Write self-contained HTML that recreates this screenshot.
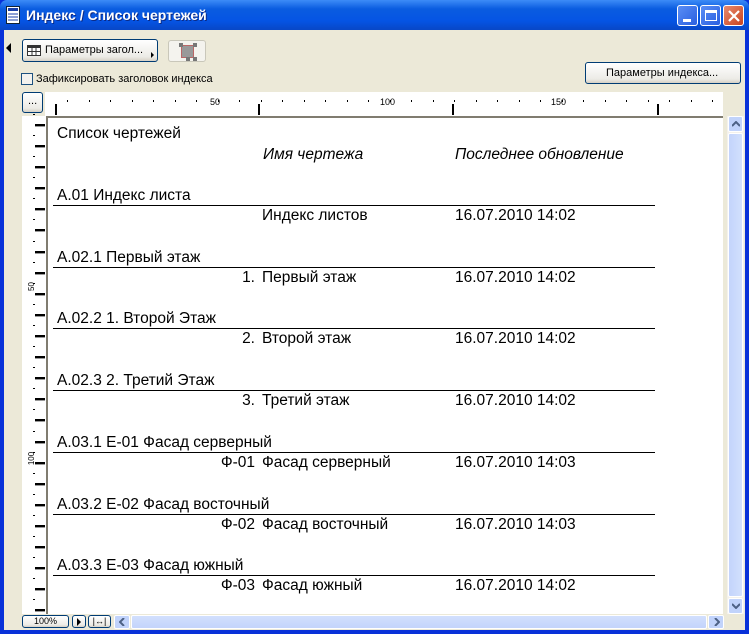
<!DOCTYPE html>
<html><head><meta charset="utf-8"><style>
*{margin:0;padding:0;box-sizing:border-box}
body{width:749px;height:634px;overflow:hidden;background:#0831d9;font-family:"Liberation Sans",sans-serif;position:relative}
.abs{position:absolute}
#title{left:0;top:0;width:749px;height:30px;background:linear-gradient(#3d8cf7,#0a5ce0 30%,#0554e4 70%,#0847c6);border-radius:7px 7px 0 0}
#title span{position:absolute;left:26px;top:7px;color:#fff;font-weight:bold;font-size:14px;text-shadow:1px 1px #0b2a85}
#client{left:4px;top:30px;width:741px;height:600px;background:#ece9d8}
.wbtn{top:5px;width:21px;height:21px;border:1px solid #fff;border-radius:3px;background:linear-gradient(135deg,#5a8ef5,#2a5fe0)}
.btn{border:1px solid #003c74;border-radius:3px;background:linear-gradient(#fff,#ecebe6 80%,#d6d0c5);font-size:11px;color:#000}
.t{position:absolute;font-size:15.5px;color:#000;white-space:nowrap;line-height:16px}
.ln{position:absolute;left:53px;width:602px;height:1px;background:#000}
.i{font-style:italic}
</style></head><body>
<div id="title" class="abs">
 <svg class="abs" style="left:6px;top:6px" width="14" height="18"><rect x="0.5" y="0.5" width="13" height="17" fill="#fff" stroke="#123"/><rect x="2" y="2" width="10" height="3" fill="#1a3fa8"/><g stroke="#1a3fa8"><line x1="2" y1="8" x2="12" y2="8"/><line x1="2" y1="11" x2="12" y2="11"/><line x1="2" y1="14" x2="12" y2="14"/></g></svg>
 <span>Индекс / Список чертежей</span>
 <div class="abs wbtn" style="left:677px"><div class="abs" style="left:5px;top:13px;width:8px;height:3px;background:#fff"></div></div>
 <div class="abs wbtn" style="left:700px"><div class="abs" style="left:4px;top:4px;width:12px;height:11px;border:1px solid #fff;border-top:3px solid #fff"></div></div>
 <div class="abs wbtn" style="left:723px;background:linear-gradient(135deg,#e88a6e,#c94420)"><svg class="abs" style="left:4px;top:4px" width="12" height="12"><path d="M1 1L11 11M11 1L1 11" stroke="#fff" stroke-width="2.2"/></svg></div>
</div>
<div id="client" class="abs"></div>
<svg class="abs" style="left:6px;top:43px" width="6" height="10"><path d="M5 0L0 5L5 10Z" fill="#000"/></svg>
<div class="abs btn" style="left:22px;top:39px;width:136px;height:23px"><svg class="abs" style="left:4px;top:5px" width="14" height="11"><rect x="0.5" y="0.5" width="13" height="10" fill="#fff" stroke="#333"/><rect x="0" y="0" width="14" height="3" fill="#333"/><path d="M0 6.5H14M5 3V11M9 3V11" stroke="#333"/></svg><span class="abs" style="left:22px;top:4px">Параметры загол...</span><svg class="abs" style="left:128px;top:12px" width="4" height="6"><path d="M0 0L3 3L0 6Z"/></svg></div>
<div class="abs" style="left:168px;top:40px;width:38px;height:22px;border:1px solid #c9c7ba;border-radius:3px;background:#f4f3ee"><div class="abs" style="left:12px;top:4px;width:13px;height:13px;background:#999;border:1px solid #b66"></div><svg class="abs" style="left:10px;top:2px" width="18" height="18" fill="#777"><rect x="0" y="0" width="4" height="4"/><rect x="14" y="0" width="4" height="4"/><rect x="14" y="14" width="4" height="4"/><rect x="7" y="14" width="4" height="4"/></svg></div>
<div class="abs" style="left:21px;top:73px;width:12px;height:12px;border:1px solid #1c5180;background:#f3f2ee"></div>
<span class="abs" style="left:36px;top:73px;font-size:11px">Зафиксировать заголовок индекса</span>
<div class="abs btn" style="left:585px;top:62px;width:156px;height:22px"><span class="abs" style="left:20px;top:4px">Параметры индекса...</span></div>
<div class="abs btn" style="left:22px;top:92px;width:21px;height:21px"><span class="abs" style="left:5px;top:2px">...</span></div>
<div class="abs" style="left:45px;top:92px;width:678px;height:24px;background:#fff"></div>
<div class="abs" style="left:22px;top:116px;width:24px;height:498px;background:#fff"></div>
<div class="abs" style="left:46px;top:116px;width:677px;height:498px;background:#fff;border-left:2px solid #807c70;border-top:2px solid #807c70"></div>
<div id="rt"></div>
<span class="abs" style="left:210px;top:97px;font-size:9px">50</span>
<span class="abs" style="left:380px;top:97px;font-size:9px">100</span>
<span class="abs" style="left:551px;top:97px;font-size:9px">150</span>
<span class="abs" style="left:27px;top:282px;font-size:8px;transform:rotate(-90deg)">50</span>
<span class="abs" style="left:25px;top:454px;font-size:8px;transform:rotate(-90deg)">100</span>
<div class="t" style="left:57px;top:126px">Список чертежей</div>
<div class="t i" style="left:263px;top:147px">Имя чертежа</div>
<div class="t i" style="left:455px;top:147px">Последнее обновление</div>
<div id="rows"></div>
<div class="abs" style="left:727px;top:116px;width:17px;height:498px;background:#f3f1ec"></div>
<div class="abs" style="left:728px;top:116px;width:15px;height:16px;border:1px solid #fff;border-radius:2px;background:#c1d3fb"><svg class="abs" style="left:3px;top:4px" width="8" height="6"><path d="M0 5L4 1L8 5" stroke="#4d6185" stroke-width="2" fill="none"/></svg></div>
<div class="abs" style="left:728px;top:133px;width:15px;height:464px;border:1px solid #fff;border-radius:2px;background:linear-gradient(90deg,#c3d4fb,#d2e0fd)"></div>
<div class="abs" style="left:728px;top:598px;width:15px;height:16px;border:1px solid #fff;border-radius:2px;background:#c1d3fb"><svg class="abs" style="left:3px;top:4px" width="8" height="6"><path d="M0 1L4 5L8 1" stroke="#4d6185" stroke-width="2" fill="none"/></svg></div>
<div class="abs btn" style="left:22px;top:615px;width:47px;height:13px;font-size:9px;text-align:center;line-height:11px">100%</div>
<div class="abs btn" style="left:72px;top:615px;width:14px;height:13px"><svg class="abs" style="left:4px;top:2px" width="5" height="8"><path d="M0 0L4 4L0 8Z"/></svg></div>
<div class="abs btn" style="left:88px;top:615px;width:23px;height:13px;font-size:9px;text-align:center;line-height:10px">|↔|</div>
<div class="abs" style="left:114px;top:615px;width:16px;height:14px;border:1px solid #fff;border-radius:2px;background:#c1d3fb"><svg class="abs" style="left:4px;top:2px" width="6" height="8"><path d="M5 0L1 4L5 8" stroke="#4d6185" stroke-width="2" fill="none"/></svg></div>
<div class="abs" style="left:131px;top:615px;width:576px;height:14px;border:1px solid #fff;border-radius:2px;background:linear-gradient(#d2e0fd,#c3d4fb)"></div>
<div class="abs" style="left:708px;top:615px;width:16px;height:14px;border:1px solid #fff;border-radius:2px;background:#c1d3fb"><svg class="abs" style="left:5px;top:2px" width="6" height="8"><path d="M1 0L5 4L1 8" stroke="#4d6185" stroke-width="2" fill="none"/></svg></div>
<script>
var rows=[["А.01  Индекс листа","","Индекс листов","16.07.2010 14:02"],["А.02.1 Первый этаж","1.","Первый этаж","16.07.2010 14:02"],["А.02.2 1. Второй  Этаж","2.","Второй этаж","16.07.2010 14:02"],["А.02.3 2. Третий Этаж","3.","Третий этаж","16.07.2010 14:02"],["А.03.1 Е-01 Фасад серверный","Ф-01","Фасад серверный","16.07.2010 14:03"],["А.03.2 Е-02 Фасад восточный","Ф-02","Фасад восточный","16.07.2010 14:03"],["А.03.3 Е-03 Фасад южный","Ф-03","Фасад южный","16.07.2010 14:02"]];
var h="";rows.forEach(function(r,i){var y=188+i*61.7;
h+='<div class="t" style="left:57px;top:'+y+'px">'+r[0]+'</div><div class="ln" style="top:'+(y+17)+'px"></div>';
if(r[1])h+='<div class="t" style="right:494px;top:'+(y+20)+'px">'+r[1]+'</div>';
h+='<div class="t" style="left:262px;top:'+(y+20)+'px">'+r[2]+'</div><div class="t" style="left:455px;top:'+(y+20)+'px">'+r[3]+'</div>';});
document.getElementById("rows").innerHTML=h;
var g="";for(var x=67;x<720;x+=21.5){g+='<div class="abs" style="left:'+Math.round(x)+'px;top:100px;width:1px;height:2px;background:#000"></div>';}
[55,258,452,657].forEach(function(x){g+='<div class="abs" style="left:'+x+'px;top:104px;width:2px;height:11px;background:#000"></div>';});
for(var y=124;y<612;y+=21.1){g+='<div class="abs" style="left:35px;top:'+Math.round(y)+'px;width:10px;height:2px;background:#000;box-shadow:0 1px #999"></div><div class="abs" style="left:33px;top:'+Math.round(y-10)+'px;width:2px;height:1px;background:#000"></div>';}
document.getElementById("rt").innerHTML=g;
</script>
</body></html>
